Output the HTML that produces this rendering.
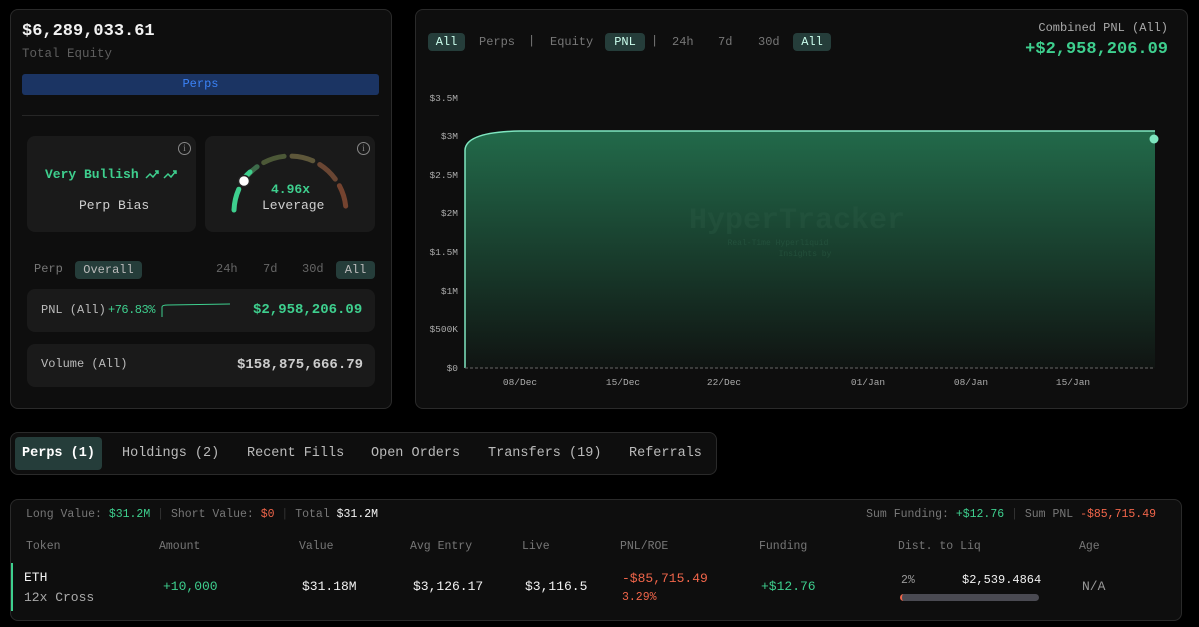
<!DOCTYPE html>
<html><head><meta charset="utf-8"><style>
*{margin:0;padding:0;box-sizing:border-box}
body{width:1199px;height:627px;background:#000;font-family:"Liberation Mono",monospace;color:#d4d4d4;position:relative;overflow:hidden}
.a{position:absolute;white-space:nowrap}
.panel{position:absolute;background:#0e0e0e;border:1px solid #2a2a2a;border-radius:8px}
.card{position:absolute;background:#1a1a1a;border-radius:8px}
.g{color:#3ecf8e}.r{color:#f0654a}.m{color:#8a8a8a}.w{color:#f2f2f2}
.pill{position:absolute;background:#253d3a;border-radius:4px;color:#cfe;text-align:center}
.info{position:absolute;width:13px;height:13px;border:1.3px solid #888;border-radius:50%;font-size:9px;color:#888;text-align:center;line-height:11px;font-family:"Liberation Serif",serif}
</style></head><body>

<div class="panel" style="left:10px;top:9px;width:382px;height:400px"></div>
<div class="a w" style="left:22px;top:22px;font-size:17px;font-weight:bold">$6,289,033.61</div>
<div class="a" style="left:22px;top:47px;font-size:12.5px;color:#5e5e5e">Total Equity</div>
<div class="a" style="left:22px;top:74px;width:357px;height:21px;background:#1b3463;border-radius:3px;color:#3b82f6;font-size:12px;text-align:center;line-height:21px">Perps</div>
<div class="a" style="left:22px;top:115px;width:357px;height:1px;background:#262626"></div>

<div class="card" style="left:27px;top:136px;width:169px;height:96px"></div>
<div class="info" style="left:178px;top:142px">i</div>
<div class="a g" style="left:45px;top:167px;font-size:13px;font-weight:bold">Very Bullish</div>
<svg class="a" style="left:145px;top:168px" width="34" height="12" viewBox="0 0 34 12" fill="none" stroke="#3ecf8e" stroke-width="1.5"><path d="M1 10l4-4 3 3 5-6M10 3h3v3"/><path d="M19 10l4-4 3 3 5-6M28 3h3v3"/></svg>
<div class="a" style="left:79px;top:198px;font-size:13px;color:#cfcfcf">Perp Bias</div>

<div class="card" style="left:205px;top:136px;width:170px;height:96px"></div>
<div class="info" style="left:357px;top:142px">i</div>
<svg class="a" style="left:0;top:0" width="400" height="240" fill="none" stroke-width="5" stroke-linecap="round">
<path d="M234 210A56 56 0 0 1 238.8 189.2" stroke="#3ecf8e"/>
<path d="M242.5 182.3A56 56 0 0 1 257.1 166.7" stroke="#3d6b4a"/>
<path d="M263.7 162.6A56 56 0 0 1 284.1 156.3" stroke="#4c5837"/>
<path d="M292 156.1A56 56 0 0 1 312.8 160.8" stroke="#5e573a"/>
<path d="M319.7 164.5A56 56 0 0 1 335.3 179.1" stroke="#6a4633"/>
<path d="M339.4 185.7A56 56 0 0 1 345.7 206.1" stroke="#74432f"/>
<path d="M244 178A56 56 0 0 1 250 172" stroke="#3ecf8e"/>
<circle cx="244" cy="181" r="5.5" fill="#fff" stroke="#222" stroke-width="1.5"/>
</svg>
<div class="a g" style="left:271px;top:182px;font-size:13px;font-weight:bold">4.96x</div>
<div class="a" style="left:262px;top:198px;font-size:13px;color:#cfcfcf">Leverage</div>

<div class="a" style="left:34px;top:262px;font-size:12px;color:#777">Perp</div>
<div class="pill" style="left:75px;top:261px;width:67px;height:18px;font-size:12px;line-height:18px;color:#bbb">Overall</div>
<div class="a" style="left:216px;top:262px;font-size:12px;color:#666">24h</div>
<div class="a" style="left:263px;top:262px;font-size:12px;color:#666">7d</div>
<div class="a" style="left:302px;top:262px;font-size:12px;color:#666">30d</div>
<div class="pill" style="left:336px;top:261px;width:39px;height:18px;font-size:12px;line-height:18px;color:#bbb">All</div>

<div class="card" style="left:27px;top:289px;width:348px;height:43px"></div>
<div class="a" style="left:41px;top:303px;font-size:12px;color:#bbb">PNL (All)</div>
<div class="a g" style="left:108px;top:303px;font-size:12px;letter-spacing:-0.5px">+76.83%</div>
<svg class="a" style="left:160px;top:302px" width="72" height="16" fill="none" stroke="#3ecf8e" stroke-width="1"><path d="M2 15V5Q2 3 8 3L70 2"/></svg>
<div class="a g" style="left:253px;top:302px;font-size:14px;font-weight:bold">$2,958,206.09</div>

<div class="card" style="left:27px;top:344px;width:348px;height:43px"></div>
<div class="a" style="left:41px;top:357px;font-size:12px;color:#bbb">Volume (All)</div>
<div class="a" style="left:237px;top:357px;font-size:14px;font-weight:bold;color:#ccc">$158,875,666.79</div>

<div class="panel" style="left:415px;top:9px;width:773px;height:400px"></div>
<div class="pill" style="left:428px;top:33px;width:37px;height:18px;font-size:12px;line-height:18px">All</div>
<div class="a" style="left:479px;top:35px;font-size:12px;color:#777">Perps</div>
<div class="a" style="left:528px;top:34px;font-size:12px;color:#777">|</div>
<div class="a" style="left:550px;top:35px;font-size:12px;color:#777">Equity</div>
<div class="pill" style="left:605px;top:33px;width:40px;height:18px;font-size:12px;line-height:18px">PNL</div>
<div class="a" style="left:651px;top:34px;font-size:12px;color:#777">|</div>
<div class="a" style="left:672px;top:35px;font-size:12px;color:#777">24h</div>
<div class="a" style="left:718px;top:35px;font-size:12px;color:#777">7d</div>
<div class="a" style="left:758px;top:35px;font-size:12px;color:#777">30d</div>
<div class="pill" style="left:793px;top:33px;width:38px;height:18px;font-size:12px;line-height:18px">All</div>
<div class="a" style="right:31px;top:21px;font-size:12px;color:#aaa">Combined PNL (All)</div>
<div class="a g" style="right:31px;top:40px;font-size:17px;font-weight:bold">+$2,958,206.09</div>

<svg class="a" style="left:0;top:0" width="1199" height="420">
<defs><linearGradient id="gr" x1="0" y1="0" x2="0" y2="1"><stop offset="0" stop-color="#226a4a"/><stop offset="1" stop-color="#101412"/></linearGradient></defs>
<path d="M465 368V150Q466 132 520 131H1155V368Z" fill="url(#gr)"/>
<path d="M465 368V150Q466 132 520 131H1155" fill="none" stroke="#7fe6c0" stroke-width="1.5"/>
<line x1="465" y1="368" x2="1155" y2="368" stroke="#666" stroke-dasharray="3 2"/>
<circle cx="1154" cy="139" r="4.5" fill="#7fe6c0"/>
<text x="797" y="228" font-family="Liberation Mono" font-size="30" font-weight="bold" fill="#2a5a44" text-anchor="middle" opacity="0.4">HyperTracker</text>
<text x="778" y="245" font-family="Liberation Mono" font-size="8" fill="#2a5a44" text-anchor="middle" opacity="0.6">Real-Time Hyperliquid</text>
<text x="805" y="256" font-family="Liberation Mono" font-size="8" fill="#2a5a44" text-anchor="middle" opacity="0.6">Insights by</text>
<g font-family="Liberation Mono" font-size="9.5" fill="#aaa" text-anchor="end">
<text x="458" y="101">$3.5M</text><text x="458" y="139">$3M</text><text x="458" y="178">$2.5M</text><text x="458" y="216">$2M</text><text x="458" y="255">$1.5M</text><text x="458" y="294">$1M</text><text x="458" y="332">$500K</text><text x="458" y="371">$0</text></g>
<g font-family="Liberation Mono" font-size="9.5" fill="#aaa" text-anchor="middle">
<text x="520" y="385">08/Dec</text><text x="623" y="385">15/Dec</text><text x="724" y="385">22/Dec</text><text x="868" y="385">01/Jan</text><text x="971" y="385">08/Jan</text><text x="1073" y="385">15/Jan</text></g>
</svg>

<div class="panel" style="left:10px;top:432px;width:707px;height:43px"></div>
<div class="pill" style="left:15px;top:437px;width:87px;height:33px;line-height:33px;font-size:13.5px;font-weight:bold;color:#fff">Perps (1)</div>
<div class="a" style="left:122px;top:446px;font-size:13.5px;color:#bbb">Holdings (2)</div>
<div class="a" style="left:247px;top:446px;font-size:13.5px;color:#bbb">Recent Fills</div>
<div class="a" style="left:371px;top:446px;font-size:13.5px;color:#bbb">Open Orders</div>
<div class="a" style="left:488px;top:446px;font-size:13.5px;color:#bbb">Transfers (19)</div>
<div class="a" style="left:629px;top:446px;font-size:13.5px;color:#bbb">Referrals</div>

<div class="panel" style="left:10px;top:499px;width:1172px;height:122px"></div>
<div class="a" style="left:26px;top:508px;font-size:11.5px;color:#777">Long Value: <span class="g">$31.2M</span> <span style="color:#333">|</span> Short Value: <span class="r">$0</span> <span style="color:#333">|</span> Total <span class="w">$31.2M</span></div>
<div class="a" style="right:43px;top:508px;font-size:11.5px;color:#777">Sum Funding: <span class="g">+$12.76</span> <span style="color:#333">|</span> Sum PNL <span class="r">-$85,715.49</span></div>
<div style="font-size:11.5px;color:#777">
<div class="a" style="left:26px;top:540px">Token</div><div class="a" style="left:159px;top:540px">Amount</div><div class="a" style="left:299px;top:540px">Value</div><div class="a" style="left:410px;top:540px">Avg Entry</div><div class="a" style="left:522px;top:540px">Live</div><div class="a" style="left:620px;top:540px">PNL/ROE</div><div class="a" style="left:759px;top:540px">Funding</div><div class="a" style="left:898px;top:540px">Dist. to Liq</div><div class="a" style="left:1079px;top:540px">Age</div></div>
<div class="a" style="left:11px;top:563px;width:2px;height:48px;background:#3ecf8e"></div>
<div class="a w" style="left:24px;top:570px;font-size:13px">ETH</div>
<div class="a" style="left:24px;top:590px;font-size:13px;color:#aaa">12x Cross</div>
<div class="a g" style="left:163px;top:579px;font-size:13px">+10,000</div>
<div class="a w" style="left:302px;top:579px;font-size:13px">$31.18M</div>
<div class="a w" style="left:413px;top:579px;font-size:13px">$3,126.17</div>
<div class="a w" style="left:525px;top:579px;font-size:13px">$3,116.5</div>
<div class="a r" style="left:622px;top:571px;font-size:13px">-$85,715.49</div>
<div class="a r" style="left:622px;top:591px;font-size:11.5px">3.29%</div>
<div class="a g" style="left:761px;top:579px;font-size:13px">+$12.76</div>
<div class="a" style="left:901px;top:574px;font-size:11.5px;color:#999">2%</div>
<div class="a w" style="left:962px;top:573px;font-size:12px">$2,539.4864</div>
<div class="a" style="left:900px;top:594px;width:139px;height:7px;background:#4a4a52;border-radius:4px;border-left:2px solid #f0654a"></div>
<div class="a" style="left:1082px;top:579px;font-size:13px;color:#999">N/A</div>
</body></html>
